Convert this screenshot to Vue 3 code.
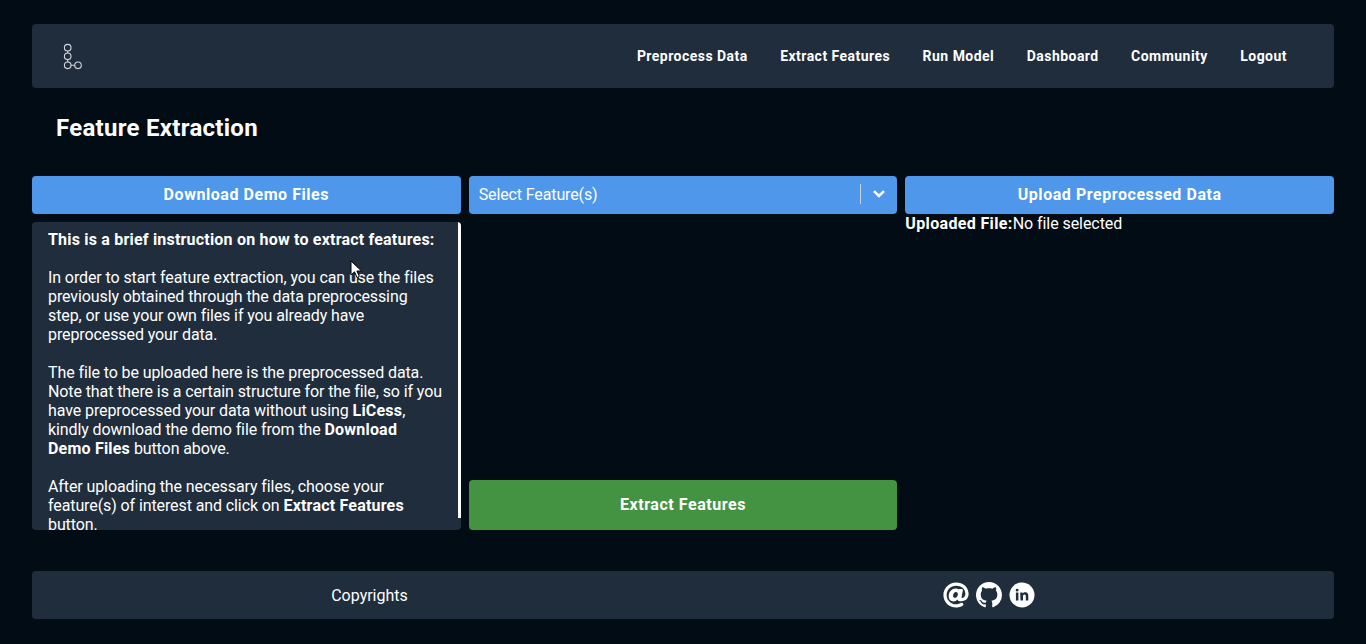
<script setup>
const links = ['Preprocess Data', 'Extract Features', 'Run Model', 'Dashboard', 'Community', 'Logout']
</script>

<template>
  <div class="page">
    <nav class="navbar">
      <svg class="logo" width="20" height="28" viewBox="0 0 20 28" fill="none" stroke="#d3d9df" stroke-width="1.1">
        <circle cx="5.700" cy="5.700" r="3.300" />
        <circle cx="5.700" cy="14.300" r="3.300" />
        <circle cx="5.700" cy="23.300" r="3.300" />
        <circle cx="16" cy="23.300" r="3.300" />
        <path d="M5.700 9v2M5.700 17.600v2.400M9 23.300h3.700" />
      </svg>
      <ul class="links">
        <li v-for="link in links" :key="link">{{ link }}</li>
      </ul>
    </nav>

    <h1 class="title">Feature Extraction</h1>

    <div class="columns">
      <div class="col">
        <button class="btn blue">Download Demo Files</button>
        <div class="instructions">
          <p><b>This is a brief instruction on how to extract features:</b></p>
          <p>In order to start feature extraction, you can use the files previously obtained through the data preprocessing step, or use your own files if you already have preprocessed your data.</p>
          <p>The file to be uploaded here is the preprocessed data. Note that there is a certain structure for the file, so if you have preprocessed your data without using <b>LiCess</b>, kindly download the demo file from the <b>Download Demo Files</b> button above.</p>
          <p>After uploading the necessary files, choose your feature(s) of interest and click on <b>Extract Features</b> button.</p>
          <div class="thumb"></div>
          <!-- mouse pointer caught in the screenshot -->
          <svg class="cursor" width="13" height="19" viewBox="0 0 13 19">
            <path d="M1 1v14l3.500-3.200 2.500 5.700 2.400-1-2.500-5.500h4.600z" fill="#fff" stroke="#000" stroke-width="1" />
          </svg>
        </div>
      </div>

      <div class="col">
        <div class="select">
          <span class="placeholder">Select Feature(s)</span>
          <span class="sep"></span>
          <svg width="12" height="8" viewBox="0 0 12 8" fill="none" stroke="#fff" stroke-width="2.500">
            <path d="M1 1.200l5 4.800 5-4.800" />
          </svg>
        </div>
        <button class="btn green">Extract Features</button>
      </div>

      <div class="col">
        <button class="btn blue">Upload Preprocessed Data</button>
        <div class="uploaded"><b>Uploaded File:</b>No file selected</div>
      </div>
    </div>

    <footer class="footer">
      <div class="copy">Copyrights</div>
      <div class="socials">
        <svg width="26" height="26" viewBox="0 0 512 512" fill="#fff">
          <path d="M256 8C118.941 8 8 118.919 8 256c0 137.059 110.919 248 248 248 48.154 0 95.342-14.140 135.408-40.223 12.005-7.815 14.625-24.288 5.552-35.372l-10.177-12.433c-7.671-9.371-21.179-11.667-31.373-5.129C325.920 429.757 291.314 440 256 440c-101.458 0-184-82.542-184-184S154.542 72 256 72c100.139 0 184 57.619 184 160 0 38.786-21.093 79.742-58.170 83.693-17.349-.454-16.910-12.857-13.476-30.024l23.433-121.110C394.653 149.750 383.308 136 368.225 136h-44.981a13.518 13.518 0 0 0-13.432 11.993l-.01.092c-14.697-17.901-40.448-21.775-59.971-21.775-74.580 0-137.831 62.234-137.831 151.460 0 65.303 36.785 105.870 96 105.870 26.984 0 57.369-15.637 74.991-38.333 9.522 34.104 40.613 34.103 70.710 34.103C462.609 379.410 504 307.798 504 232 504 95.653 394.023 8 256 8zm-21.680 304.430c-22.249 0-36.070-15.623-36.070-40.771 0-44.993 30.779-72.729 58.630-72.729 22.292 0 35.601 15.241 35.601 40.770 0 45.061-33.875 72.730-58.161 72.730z" />
        </svg>
        <svg width="26" height="26" viewBox="0 0 16 16" fill="#fff">
          <path d="M8 0C3.580 0 0 3.580 0 8c0 3.540 2.290 6.530 5.470 7.590.4.070.55-.17.55-.38 0-.19-.01-.82-.01-1.490-2.010.37-2.530-.49-2.690-.94-.09-.23-.48-.94-.82-1.130-.28-.15-.68-.52-.01-.53.63-.01 1.080.58 1.230.82.720 1.210 1.870.87 2.330.66.070-.52.280-.87.510-1.070-1.780-.2-3.640-.89-3.640-3.950 0-.87.310-1.590.820-2.150-.08-.2-.36-1.020.080-2.120 0 0 .670-.21 2.200.820.640-.18 1.320-.27 2-.27s1.360.09 2 .27c1.530-1.040 2.200-.82 2.200-.82.440 1.100.160 1.920.080 2.120.510.560.820 1.270.820 2.150 0 3.070-1.870 3.750-3.650 3.950.290.250.540.730.540 1.480 0 1.070-.010 1.930-.010 2.200 0 .210.150.460.550.380A8.010 8.010 0 0 0 16 8c0-4.420-3.580-8-8-8z" />
        </svg>
        <svg width="26" height="26" viewBox="0 0 26 26">
          <circle cx="13" cy="13" r="12.500" fill="#fff" />
          <path fill="#1f2d3d" d="M6.900 10.500h2.500v8H6.900zM8.150 6.700a1.450 1.450 0 1 1 0 2.900 1.450 1.450 0 0 1 0-2.900zM11.200 10.500h2.400v1.100c.4-.7 1.300-1.300 2.600-1.300 2.600 0 3.100 1.700 3.100 3.900v4.300h-2.500v-3.800c0-1 0-2.200-1.300-2.200s-1.500 1-1.500 2.100v3.900h-2.500z" />
        </svg>
      </div>
    </footer>
  </div>
</template>

<style scoped>
.page {
  height: 644px;
  box-sizing: border-box;
  padding: 24px 32px 25px;
  display: flex;
  flex-direction: column;
  font-family: Roboto, "Liberation Sans", sans-serif;
  font-size: 16px;
  color: #fff;
}

.navbar {
  height: 64px;
  flex: none;
  display: flex;
  align-items: center;
  justify-content: space-between;
  padding: 0 47px 0 30px;
  background: #1f2d3d;
  border-radius: 4px;
}

.logo {
  display: block;
}

.links {
  display: flex;
  gap: 32.400px;
  list-style: none;
  margin: 0;
  padding: 0;
  font-size: 14px;
  font-weight: 700;
  letter-spacing: 0.47px;
}

.title {
  margin: 0;
  padding: 26px 24px 34px;
  font-size: 24px;
  line-height: 28px;
  font-weight: 700;
  letter-spacing: 0.28px;
}

.columns {
  height: 354px;
  flex: none;
  display: grid;
  grid-template-columns: repeat(3, 1fr);
  gap: 8px;
}

.col {
  display: flex;
  flex-direction: column;
  justify-content: space-between;
  min-height: 0;
}

.btn {
  border: none;
  border-radius: 4px;
  padding: 0 0 2px;
  color: #fff;
  font-family: inherit;
  font-size: 16px;
  font-weight: 700;
  letter-spacing: 0.55px;
}

.blue {
  height: 38px;
  flex: none;
  background: #4e97eb;
}

.green {
  height: 50px;
  background: #439343;
}

.select {
  height: 38px;
  display: flex;
  align-items: center;
  padding: 0 12px 2px 10px;
  box-sizing: border-box;
  background: #4e97eb;
  border-radius: 4px;
  letter-spacing: -0.12px;
}

.placeholder {
  flex: 1;
}

.sep {
  width: 1px;
  height: 20px;
  margin-right: 12px;
  background: #c9d3dc;
}

.instructions {
  position: relative;
  height: 308px;
  overflow: hidden;
  box-sizing: border-box;
  padding: 8px 18px 0 16px;
  margin-top: 8px;
  background: #1f2d3d;
  border-radius: 4px;
  line-height: 19px;
  letter-spacing: -0.1px;
}

.instructions p {
  margin: 0 0 19px;
}

.instructions b {
  letter-spacing: 0.2px;
}

.thumb {
  position: absolute;
  top: 0;
  right: 0;
  width: 3px;
  height: 296px;
  background: #fff;
}

.cursor {
  position: absolute;
  left: 318px;
  top: 38px;
}

.uploaded {
  flex: 1;
  line-height: 19px;
  letter-spacing: -0.06px;
}

.uploaded b {
  letter-spacing: 0.35px;
}

.footer {
  height: 48px;
  flex: none;
  margin-top: auto;
  display: grid;
  grid-template-columns: 1fr 1fr;
  align-items: center;
  background: #1f2d3d;
  border-radius: 4px;
}

.copy {
  text-align: center;
  padding-left: 24px;
}

.socials {
  display: flex;
  justify-content: center;
  gap: 7px;
  padding-right: 40px;
}

.socials svg {
  display: block;
}
</style>

<style>
html,
body {
  background: #020c14;
}
</style>
